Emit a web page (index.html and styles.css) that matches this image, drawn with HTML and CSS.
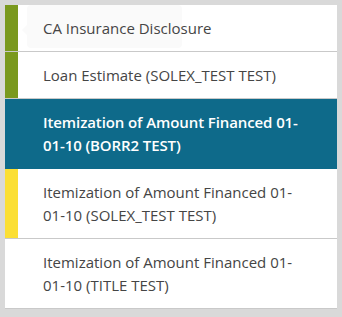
FILE: index.html
```html
<!DOCTYPE html>
<html lang="en">
<head>
<meta charset="utf-8">
<title>Documents</title>
<link rel="stylesheet" href="styles.css">
</head>
<body>
<div class="panel">
  <div class="row">
    <span class="bar bar-green"></span>
    <span class="label">CA Insurance Disclosure</span>
    <span class="ghost-tip" aria-hidden="true"></span>
  </div>
  <div class="row">
    <span class="bar bar-green"></span>
    <span class="label">Loan Estimate (SOLEX_TEST TEST)</span>
  </div>
  <div class="row selected">
    <span class="bar"></span>
    <span class="label">Itemization of Amount Financed 01-<br>01-10 (BORR2 TEST)</span>
  </div>
  <div class="row">
    <span class="bar bar-yellow"></span>
    <span class="label">Itemization of Amount Financed 01-<br>01-10 (SOLEX_TEST TEST)</span>
  </div>
  <div class="row">
    <span class="bar"></span>
    <span class="label">Itemization of Amount Financed 01-<br>01-10 (TITLE TEST)</span>
  </div>
</div>
</body>
</html>
```
FILE: styles.css
```css
html, body {
  margin: 0;
  padding: 0;
}
body {
  background: #d9d9d9;
  padding: 5px;
  font-family: "Open Sans", "Noto Sans", sans-serif;
}
.panel {
  width: 332px;
  background: #ffffff;
  display: flex;
  flex-direction: column;
}
.row {
  position: relative;
  display: flex;
  border-bottom: 1px solid #c9c9c9;
  color: #454545;
}
.row.selected {
  background: #0e6a8a;
  color: #ffffff;
  border-bottom-color: #0e6a8a;
}
.row.selected .label {
  font-weight: 600;
  letter-spacing: -0.1px;
}
.bar {
  flex: 0 0 13px;
}
.bar-green { background: #7a991e; }
.bar-yellow { background: #fbdf34; }
.label {
  position: relative;
  z-index: 1;
  padding: 11.5px 0 11.5px 25px;
  font-size: 15px;
  line-height: 23px;
  white-space: nowrap;
}
.ghost-tip {
  position: absolute;
  left: 22px;
  top: 0;
  width: 155px;
  height: 43px;
  background: #fafafa;
  border-radius: 4px;
  z-index: 0;
}
.ghost-tip::before {
  content: "";
  position: absolute;
  left: -5px;
  top: 20px;
  border-top: 5px solid transparent;
  border-bottom: 5px solid transparent;
  border-right: 5px solid #fafafa;
}
```
